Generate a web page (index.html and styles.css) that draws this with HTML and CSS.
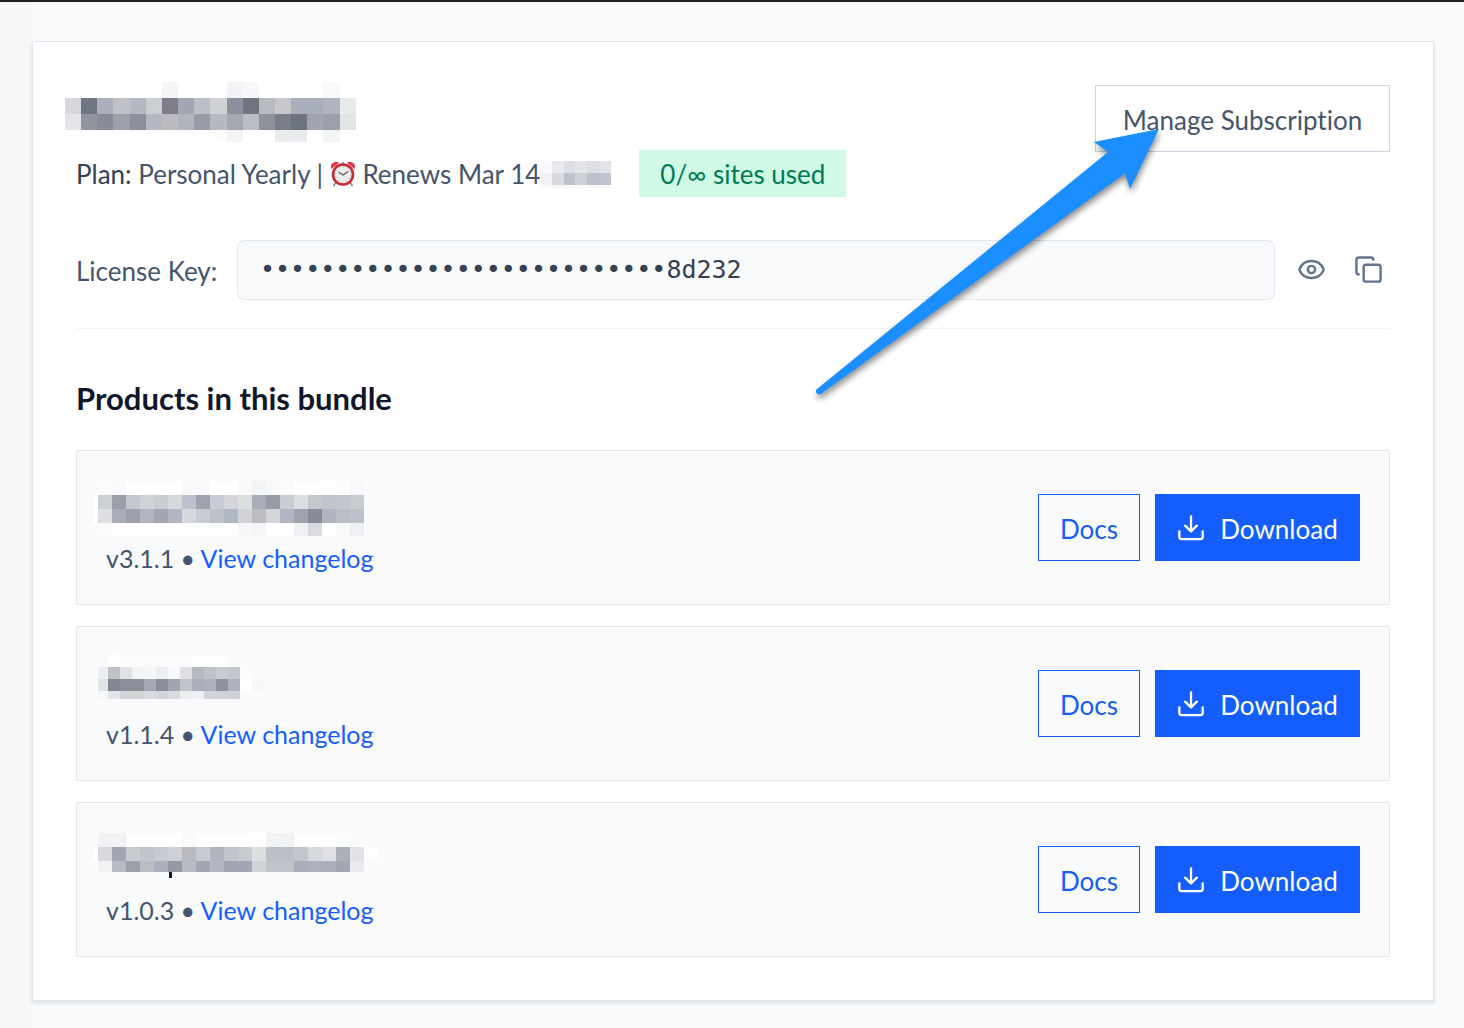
FILE: index.html
```html
<!DOCTYPE html>
<html lang="en">
<head>
<meta charset="utf-8">
<meta name="viewport" content="width=device-width, initial-scale=1">
<title>Subscription</title>
<link rel="stylesheet" href="styles.css">
</head>
<body>
<main class="page">
  <section class="card">
    <header class="card-header">
      <div class="summary">
        <div class="bundle-name"><svg class="mosaic" data-mosaic="bundle" width="291" height="70" aria-hidden="true"></svg></div>
        <div class="meta">
          <p class="plan"><span class="plan-label">Plan:</span> Personal Yearly | <svg class="clock" viewBox="0 0 26 26" aria-hidden="true"><path d="M6 21 3.500 25M20 21l2.500 4" stroke="#8d8587" stroke-width="1.500"/><path d="M13 1v3" stroke="#999" stroke-width="2"/><path d="M1.500 8C-.5 3 4 0 9 1.500ZM24.500 8C26.500 3 22 0 17 1.500Z" fill="#e3344b"/><circle cx="13" cy="13.500" r="10" fill="#eceded" stroke="#c32b35" stroke-width="2.600"/><circle cx="13" cy="13.500" r="7.500" fill="none" stroke="#a7a7a7" stroke-dasharray="1 2.900"/><path d="M8.500 11 13 14l5-3.500" fill="none" stroke="#555" stroke-width="1.200"/></svg> Renews Mar 14</p>
          <svg class="mosaic" data-mosaic="date" width="71" height="29" aria-hidden="true"></svg>
          <span class="badge">0/∞ sites used</span>
        </div>
      </div>
      <button class="btn btn-neutral" type="button">Manage Subscription</button>
    </header>

    <div class="license">
      <label for="license-key">License Key:</label>
      <input id="license-key" class="license-key" type="text" readonly value="•••••••••••••••••••••••••••8d232">
      <button class="icon-btn" type="button" aria-label="Show license key"><svg viewBox="0 0 24 24"><path d="M2.060 12.350a1 1 0 0 1 0-.7 10.750 10.750 0 0 1 19.880 0 1 1 0 0 1 0 .7 10.750 10.750 0 0 1-19.880 0"/><circle cx="12" cy="12" r="3"/></svg></button>
      <button class="icon-btn" type="button" aria-label="Copy license key"><svg viewBox="0 0 24 24"><rect x="8" y="8" width="14" height="14" rx="2"/><path d="M4 16c-1.100 0-2-.9-2-2V4c0-1.100.9-2 2-2h10c1.100 0 2 .9 2 2"/></svg></button>
    </div>

    <h2 class="section-title">Products in this bundle</h2>
    <ul class="products">
      <li class="product">
        <div class="info">
          <div class="product-name"><svg class="mosaic" data-mosaic="first" width="271" height="60" aria-hidden="true"></svg></div>
          <p class="version">v3.1.1 • <a href="#changelog-1">View changelog</a></p>
        </div>
        <div class="actions">
          <a class="btn btn-outline" href="#docs-1">Docs</a>
          <button class="btn btn-primary" type="button"><svg viewBox="0 0 24 24"><path d="M12 2v13M7 10l5 5 5-5M2 15v4.500a2 2 0 0 0 2 2h16a2 2 0 0 0 2-2V15"/></svg>Download</button>
        </div>
      </li>
      <li class="product">
        <div class="info">
          <div class="product-name"><svg class="mosaic" data-mosaic="second" width="271" height="60" aria-hidden="true"></svg></div>
          <p class="version">v1.1.4 • <a href="#changelog-2">View changelog</a></p>
        </div>
        <div class="actions">
          <a class="btn btn-outline" href="#docs-2">Docs</a>
          <button class="btn btn-primary" type="button"><svg viewBox="0 0 24 24"><path d="M12 2v13M7 10l5 5 5-5M2 15v4.500a2 2 0 0 0 2 2h16a2 2 0 0 0 2-2V15"/></svg>Download</button>
        </div>
      </li>
      <li class="product">
        <div class="info">
          <div class="product-name"><svg class="mosaic" data-mosaic="third" width="285" height="60" aria-hidden="true"></svg></div>
          <p class="version">v1.0.3 • <a href="#changelog-3">View changelog</a></p>
        </div>
        <div class="actions">
          <a class="btn btn-outline" href="#docs-3">Docs</a>
          <button class="btn btn-primary" type="button"><svg viewBox="0 0 24 24"><path d="M12 2v13M7 10l5 5 5-5M2 15v4.500a2 2 0 0 0 2 2h16a2 2 0 0 0 2-2V15"/></svg>Download</button>
        </div>
      </li>
    </ul>

    <svg class="arrow" width="360" height="290" viewBox="810 120 360 290" aria-hidden="true"><path d="M1159 129 1094 142 1108 152 816.500 389.500Q815 392 817 393.500T821 394L1125 173.500 1130 189Z" fill="#1b8fff"/></svg>
  </section>
</main>
<script src="mosaic.js"></script>
</body>
</html>
```
FILE: styles.css
```css
* { box-sizing: border-box; }

body {
  margin: 0;
  min-height: 100vh;
  border-top: 2px solid #1f1f21;
  background: linear-gradient(90deg, #f6f7f9 32px, #f9fafc 32px);
  color: #45556c;
  font: 26px/36px Lato, "Open Sans", sans-serif;
  font-variant-ligatures: none;
}

p, h2, ul { margin: 0; padding: 0; }
a { color: #155dfc; text-decoration: none; }
button, input { font: inherit; font-variant-ligatures: none; }

.page { padding: 39px 30px 27px 32px; }

.card {
  position: relative;
  padding: 43px;
  border: 1px solid #e2e8f0;
  background: #fff;
  box-shadow: 0 2px 4px rgb(15 23 42 / 12%);
}

.card-header {
  display: flex;
  align-items: flex-start;
  justify-content: space-between;
}

.mosaic { display: block; flex: none; }
.bundle-name { height: 65px; margin: -12px 0 12px -11px; }
.meta { display: flex; align-items: center; height: 47px; }
.plan { white-space: nowrap; }
.plan-label { color: #314158; }
.clock { width: 26px; height: 26px; vertical-align: -3px; fill: none; }
.badge {
  margin-left: 28px;
  padding: 6px 21px 5px;
  background: #d0fae5;
  color: #007a55;
  white-space: nowrap;
}

.btn {
  display: inline-flex;
  align-items: center;
  justify-content: center;
  gap: 15px;
  height: 67px;
  padding: 2px 21px 0;
  border: 1px solid;
  border-radius: 0;
  white-space: nowrap;
  cursor: pointer;
}
.btn svg {
  width: 28px;
  height: 28px;
  margin-bottom: 2px;
  fill: none;
  stroke: currentColor;
  stroke-width: 2;
  stroke-linecap: round;
  stroke-linejoin: round;
}
.btn-neutral { min-width: 295px; border-color: #cad5e2; background: #fff; color: #45556c; }
.btn-outline { min-width: 102px; border-color: #155dfc; }
.btn-primary { min-width: 205px; border-color: #155dfc; background: #155dfc; color: #fff; }

.license {
  display: flex;
  align-items: center;
  margin-top: 43px;
  padding-bottom: 28px;
  border-bottom: 1px solid #f1f5f9;
}
.license label { width: 161px; padding-top: 2px; }
.license-key {
  flex: 1;
  min-width: 0;
  height: 60px;
  margin-right: 8px;
  padding: 0 22px 2px;
  border: 1px solid #e2e8f0;
  border-radius: 7px;
  background: #f8fafc;
  color: #364153;
  font: 25px "DejaVu Sans Mono", monospace;
}
.icon-btn {
  display: grid;
  place-items: center;
  width: 57px;
  height: 57px;
  padding: 0 0 2px;
  border: 0;
  background: none;
  cursor: pointer;
}
.icon-btn:last-child { margin-right: -7px; }
.icon-btn svg {
  width: 29px;
  height: 29px;
  fill: none;
  stroke: #62748e;
  stroke-width: 2;
  stroke-linecap: round;
  stroke-linejoin: round;
}

.section-title {
  margin: 43px 0 26px;
  color: #0f172b;
  font-size: 31px;
  line-height: 52px;
}

.products { display: grid; gap: 21px; list-style: none; }
.product {
  display: flex;
  align-items: center;
  justify-content: space-between;
  padding: 0 29px;
  min-height: 155px;
  border: 1px solid #e2e8f0;
  background: #f8fafc;
}
.product-name { height: 63px; margin-left: -13px; }
.version { font-size: 25px; line-height: 34px; padding-bottom: 2px; white-space: nowrap; }
.actions { display: flex; gap: 15px; }

.arrow {
  position: absolute;
  top: 78px;
  right: 263px;
  filter: drop-shadow(1px 4px 3px rgb(0 0 0 / 45%));
  pointer-events: none;
}
```
FILE: mosaic.js
```js
// Redacted names: each row is [top, height, left, cell width, colours]; "-" leaves a cell clear.
const mosaics = {
  bundle: [
    [9, 16, 0, 16.15, "- - - - - - f4f5f7 - - - f1f3f6 f6f8f9 - - - - f8f9fa -"],
    [25, 16, 0, 16.15, "d5d7da 717684 abb0bb bfc0c7 b5b8c2 cbced3 7e7e8a a2a7b2 bbbfc6 d0d1d5 8b8f9b 70747f b9babf c6c8cc a9aeb9 a8afba b0b4bf e8e9eb"],
    [41, 16, 0, 16.15, "e4e5e8 92959f 878c98 9d9faa 8b909c b5b8c3 babbc1 b0b4bf 989ca6 b8b9c0 a5a8b3 b9bec5 8e919b 797e88 6e7380 a0a5b0 9b9faa e3e4e7"],
    [57, 12, 0, 16.15, "- - - - - - - - - fbfcfb f3f4f7 - - eaebee eaebee - f3f4f7 -"]
  ],
  date: [
    [2, 12, 0, 11.8, "f8f9fa e9eaed dedfe4 e4e5e9 dedfe5 e2e3e8"],
    [14, 12, 0, 11.8, "f1f2f4 d8dae0 bec1cb cdd0d7 bdc0ca c1c4ce"],
    [26, 3, 0, 11.8, "fafafa f5f6f7 f8f9fa f7f8f9 f6f7f8 f8f9fa"]
  ],
  first: [
    [3, 14, 5, 14, "fafcfc f7f9fa fff fff fff fff f7f8fa f9f9fb fff fff f9fafa f3f4f6 f8f9f9 fafcfc fff fff fdfefd fcfdfc f7f8fa"],
    [17, 14, 5, 14, "cdd0d5 9c9faa c5c8ce d0d2d7 c9ccd3 d6d8de bec1cb a0a3ae c9ccd6 d4d6db dddfe2 a9aeb8 999ca6 c9ccd2 dddfe3 c5c8ce c1c4cb c3c6cc c9ccd1"],
    [31, 14, 5, 14, "dddfe2 a9adb9 9c9fac b3b6c0 a3a7b3 b4b7c2 d6d8dd c9cdd3 bec1c8 b3b8c5 d2d4da bbbdc3 d4d5db b3b6c1 a0a3af 888b98 b0b4c0 bbbfc5 bec2ca"],
    [45, 13, 5, 14, "fafcfc fff fff fff fff fefefe fcfdfd fcfefd fcfdfd fdfefd f7f8fa f4f6f8 fff fcfefd f0f1f4 d9dbdf fff f8fafc f0f1f4"],
    [17, 28, 0, 5, "fff"]
  ],
  second: [
    [1, 12, 15, 12, "fff fbfcfc fafbfc f9fbfc f9fbfc f9fbfc fbfdfc fcfefd fcfefd fcfefd"],
    [13, 12, 5, 10, "eceef0"],
    [25, 12, 5, 10, "e2e4e7"],
    [37, 8, 5, 10, "f5f7f8"],
    [13, 12, 15, 12, "bfc1c9 dfe1e4 f1f3f5 f5f6f8 eceef2 f7f9fb dddfe3 b7b9c0 bfc2cb c8cbd4 c4c8ce fafcfc"],
    [25, 12, 15, 12, "828692 8b8f9a 8c909b a5a9b5 8a8e9a a0a5b0 c0c3cb abafbb acb1bc 8d919e aeb2be fff f6f8fa"],
    [37, 8, 15, 12, "e3e5e8 d2d4d8 d3d5d9 dadbe0 d3d5da dadbe0 ebedef f0f1f4 d2d4d9 d0d2d7 cfd1d6"]
  ],
  third: [
    [3, 14, 5, 14, "f0f2f4 f0f2f4 fff fff fff fff f8fafb fff fff fff fff fdfefe f1f3f4 f0f2f4 fff fff fff fbfdfc"],
    [17, 14, 5, 14, "d7d9df a3a7b3 c8cbd0 c1c4cc c7cad3 cfd0d5 b9bac0 c7cad3 b0b4bf c1c4cb c6cbd0 dddfe3 bbbfca bcbfc8 c2c6cd d7d9df dee0e3 abb0ba e2e3e6 fcfdfc"],
    [31, 11, 5, 14, "f1f2f4 b7bac2 9c9faa bbbdc3 acb0bb 949aa4 b9bbc2 a3a7b3 b4b7c2 a2a6b2 a3a7b3 cfd2d7 c0c4ca c0c4ca a9adb9 adb1bd acafbd a2a6b3 e9ebee"],
    [17, 14, 0, 5, "fff"],
    [42, 6, 76, 3, "0f172b"]
  ]
};

document.querySelectorAll("[data-mosaic]").forEach((svg) => {
  svg.setAttribute("shape-rendering", "crispEdges");
  for (const [y, height, left, width, colours] of mosaics[svg.dataset.mosaic]) {
    colours.split(" ").forEach((colour, i) => {
      if (colour === "-") return;
      const rect = document.createElementNS("http://www.w3.org/2000/svg", "rect");
      const attrs = { x: left + i * width, y, width, height, fill: "#" + colour };
      for (const name in attrs) rect.setAttribute(name, attrs[name]);
      svg.append(rect);
    });
  }
});
```
